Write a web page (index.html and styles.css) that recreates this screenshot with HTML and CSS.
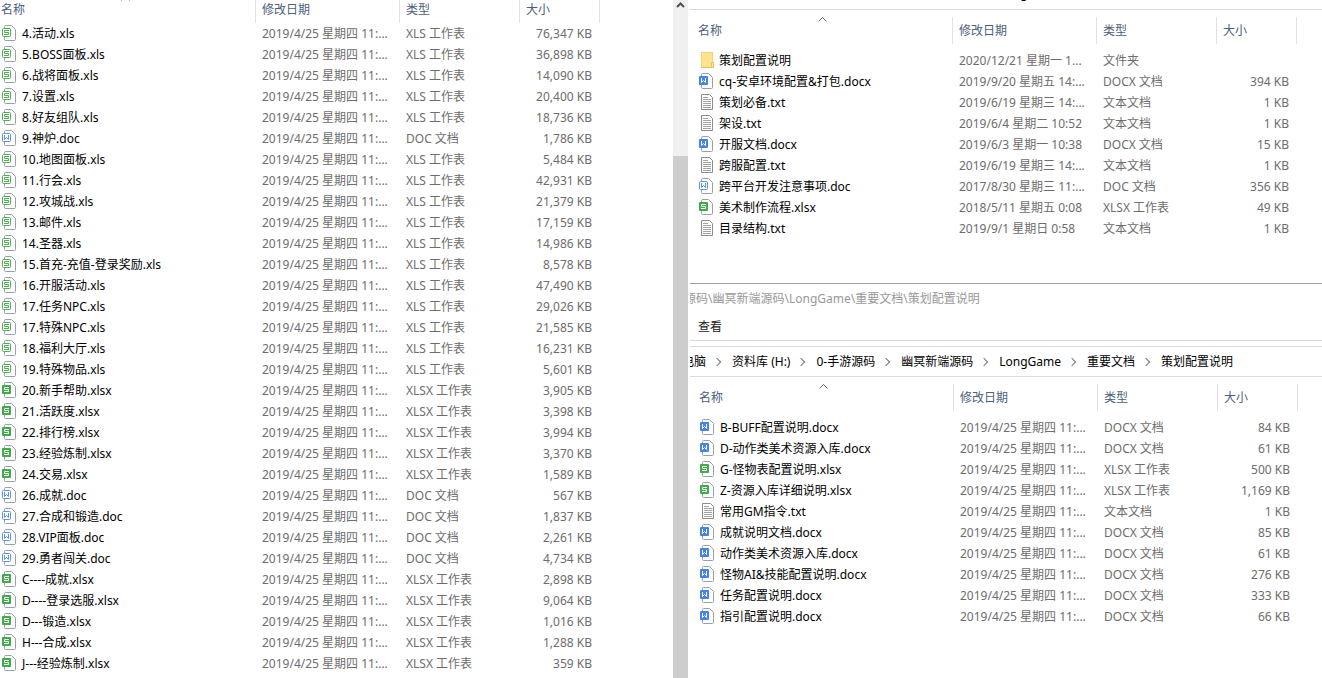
FILE: index.html
```html
<!DOCTYPE html>
<html lang="zh-CN">
<head>
    <meta charset="UTF-8">
    <meta name="viewport" content="width=device-width, initial-scale=1.0">
    <title>策划配置说明</title>
    <link rel="stylesheet" href="styles.css">
</head>
<body>

    <!-- file type icons -->
    <svg class="sprite" aria-hidden="true">
        <symbol id="page" viewBox="0 0 16 16">
            <path d="M3.500 4V1.500q0-1 1-1H10.500L14.500 4.500V14.500q0 1-1 1H4.500q-1 0-1-1V12" fill="#fff" stroke="#98a0ae"/>
        </symbol>
        <symbol id="xls" viewBox="0 0 16 16">
            <use href="#page"/>
            <rect x="1.500" y="3.500" width="8" height="8" rx="1" fill="#fff" stroke="#4caf50"/>
            <path d="M8 5.500H3.500v2h4v2H3" fill="none" stroke="#4caf50"/>
        </symbol>
        <symbol id="xlsx" viewBox="0 0 16 16">
            <use href="#page"/>
            <rect x="1" y="3" width="9" height="9" rx="1" fill="#3fac49"/>
            <path d="M8 5.500H3.500v2h4v2H3" fill="none" stroke="#fff"/>
        </symbol>
        <symbol id="doc" viewBox="0 0 16 16">
            <use href="#page"/>
            <rect x="1.500" y="3.500" width="8" height="8" rx="1" fill="#fff" stroke="#5b93ea"/>
            <path d="M3.500 5v4.500L5.500 7.500L7.500 9.500V5" fill="none" stroke="#5b93ea"/>
        </symbol>
        <symbol id="docx" viewBox="0 0 16 16">
            <use href="#page"/>
            <rect x="1" y="3" width="9" height="9" rx="1" fill="#4584e6"/>
            <path d="M3.500 5v4.500L5.500 7.500L7.500 9.500V5" fill="none" stroke="#fff"/>
        </symbol>
        <symbol id="txt" viewBox="0 0 16 16">
            <path d="M3.500 .5H11.500L14.500 3.500V15.500H3.500z" fill="#fff" stroke="#8c8c8c"/>
            <path d="M5 3.500h5M5 5.500h8M5 7.500h8M5 9.500h8M5 11.500h8M5 13.500h8" stroke="#a3a3a3"/>
        </symbol>
        <symbol id="folder" viewBox="0 0 16 16">
            <path d="M3 0H15V9.500L16 10.500V16H3z" fill="#e8c35a"/>
            <path d="M3.500 .5H14.500V15H3.500z" fill="#ffe391"/>
            <path d="M13.500 15.500V10.500h2v5z" fill="#ffe9a6" stroke="#e8c35a"/>
        </symbol>
    </svg>

    <main class="desktop">
        <section class="pane pane-left">
            <table class="files" id="list-main">
                <colgroup><col class="c-name"><col class="c-date"><col class="c-type"><col class="c-size"><col></colgroup>
                <thead><tr><th><span>名称</span><svg class="sort" viewBox="0 0 9 5"><path d="M.5 4.500l4-4 4 4"/></svg></th><th><span>修改日期</span></th><th><span>类型</span></th><th><span>大小</span></th><th></th></tr></thead>
                <tbody></tbody>
            </table>
        </section>

        <div class="scrollbar">
            <button class="scroll-up" aria-label="向上滚动"><svg viewBox="0 0 9 6"><path d="M1 5l3.500-3.500L8 5"/></svg></button>
            <div class="thumb"></div>
        </div>

        <section class="pane pane-right">
            <div class="window window-top">
                <nav class="crumbs">
                    <a href="#">电脑</a><a href="#">资料库 (H:)</a><a href="#">0-手游源码</a><a href="#">幽冥新端源码</a><a href="#">LongGame</a><a href="#">重要文档</a>
                </nav>
                <table class="files" id="list-docs">
                    <colgroup><col class="c-name"><col class="c-date"><col class="c-type"><col class="c-size"><col></colgroup>
                    <thead><tr><th><span>名称</span><svg class="sort" viewBox="0 0 9 5"><path d="M.5 4.500l4-4 4 4"/></svg></th><th><span>修改日期</span></th><th><span>类型</span></th><th><span>大小</span></th><th></th></tr></thead>
                    <tbody></tbody>
                </table>
            </div>

            <div class="window window-bottom">
                <div class="title">源码\幽冥新端源码\LongGame\重要文档\策划配置说明</div>
                <div class="menu"><button>查看</button></div>
                <nav class="crumbs">
                    <a href="#">电脑</a><a href="#">资料库 (H:)</a><a href="#">0-手游源码</a><a href="#">幽冥新端源码</a><a href="#">LongGame</a><a href="#">重要文档</a><a href="#">策划配置说明</a>
                </nav>
                <table class="files" id="list-config">
                    <colgroup><col class="c-name"><col class="c-date"><col class="c-type"><col class="c-size"><col></colgroup>
                    <thead><tr><th><span>名称</span><svg class="sort" viewBox="0 0 9 5"><path d="M.5 4.500l4-4 4 4"/></svg></th><th><span>修改日期</span></th><th><span>类型</span></th><th><span>大小</span></th><th></th></tr></thead>
                    <tbody></tbody>
                </table>
            </div>
        </section>
    </main>

    <script src="files.js"></script>
</body>
</html>
```
FILE: styles.css
```css
* {
    box-sizing: border-box;
}
body {
    margin: 0;
    font-family: "Noto Sans", "Noto Sans CJK SC", sans-serif;
    font-size: 12px;
    line-height: 20px;
    color: #000;
    background: #fff;
}
.sprite {
    position: absolute;
    width: 0;
    height: 0;
}
.desktop {
    display: grid;
    grid-template-columns: 673fr 15px 634fr;
    height: 100vh;
    overflow: hidden;
}
.pane {
    min-width: 0;
    overflow: hidden;
}
.pane-right {
    margin-left: 2px;
}

/* file lists */
.files {
    width: 100%;
    table-layout: fixed;
    border-collapse: collapse;
}
.c-name { width: 263px; }
.c-date { width: 144px; }
.c-type { width: 120px; }
.c-size { width: 80px; }
.files th {
    position: relative;
    height: 33px;
    padding: 0;
    vertical-align: top;
    text-align: left;
    font-weight: normal;
    color: #4c607a;
}
.files th span {
    display: block;
    height: 27px;
    padding-left: 6px;
    line-height: 27px;
    border-right: 1px solid #e2e2e2;
}
.files th:first-child span {
    padding-left: 8px;
}
.sort {
    position: absolute;
    top: 0;
    left: 50%;
    width: 9px;
    height: 5px;
    margin-left: -4px;
    fill: none;
    stroke: #6e6e6e;
}
.files td {
    height: 21px;
    padding: 0 6px;
    line-height: 21px;
    color: #6d6d6d;
    white-space: nowrap;
}
.files td:first-child {
    padding-left: 8px;
    color: #000;
}
.files td:nth-child(4) {
    padding-right: 8px;
    text-align: right;
}
.name {
    display: flex;
    align-items: flex-start;
    gap: 5px;
    height: 21px;
}
.name svg {
    flex: none;
    width: 16px;
    height: 16px;
    margin-top: 2px;
}

/* the main list is scrolled a little past its top left corner */
.pane-left .files {
    margin: -4px 0 0 -7px;
}
.pane-left .files th {
    height: 27px;
}

/* scrollbar */
.scrollbar {
    display: flex;
    flex-direction: column;
    background: #f0f0f0;
}
.scroll-up {
    display: flex;
    align-items: center;
    justify-content: center;
    height: 10px;
    padding: 0;
    border: 0;
    background: none;
}
.scroll-up svg {
    width: 9px;
    height: 6px;
    fill: none;
    stroke: #505050;
    stroke-width: 2;
}
.thumb {
    flex: 1;
    margin-top: 146px;
    background: #cdcdcd;
}

/* right windows */
.window-top {
    display: flow-root;
    height: 283px;
}
.window-top .crumbs {
    margin-top: -21px;
}
.window-top .files,
.window-bottom .files {
    margin-top: 7px;
}
.window-bottom {
    border-top: 1px solid #a0a0a0;
}
.window-bottom .files {
    margin-left: 1px;
}
.title {
    height: 30px;
    margin-left: -6px;
    line-height: 30px;
    color: #999;
    white-space: nowrap;
}
.menu {
    height: 27px;
    padding: 0 8px;
    border-bottom: 1px solid #dadada;
}
.menu button {
    padding: 0;
    border: 0;
    background: none;
    font: inherit;
    line-height: 26px;
    color: #222;
}
.crumbs {
    display: flex;
    height: 31px;
    border-bottom: 1px solid #dadada;
    line-height: 30px;
    white-space: nowrap;
}
.window-bottom .crumbs {
    margin-top: 5px;
    border-top: 1px solid #dadada;
    line-height: 28px;
}
.crumbs a {
    display: flex;
    align-items: center;
    color: #000;
    text-decoration: none;
}
.crumbs a:first-child {
    margin-left: -8px;
}
.crumbs a + a::before {
    content: "";
    width: 5px;
    height: 5px;
    margin: 0 12px 0 8px;
    border: solid #777;
    border-width: 1px 1px 0 0;
    transform: rotate(45deg);
}
```
FILE: files.js
```js
const TYPES = {
    xls: "XLS 工作表",
    xlsx: "XLSX 工作表",
    doc: "DOC 文档",
    docx: "DOCX 文档",
    txt: "文本文档",
    folder: "文件夹"
};

const DAY = "2019/4/25 星期四 11:...";

const mainFiles = [
    ["4.活动.xls", DAY, "76,347 KB"],
    ["5.BOSS面板.xls", DAY, "36,898 KB"],
    ["6.战将面板.xls", DAY, "14,090 KB"],
    ["7.设置.xls", DAY, "20,400 KB"],
    ["8.好友组队.xls", DAY, "18,736 KB"],
    ["9.神炉.doc", DAY, "1,786 KB"],
    ["10.地图面板.xls", DAY, "5,484 KB"],
    ["11.行会.xls", DAY, "42,931 KB"],
    ["12.攻城战.xls", DAY, "21,379 KB"],
    ["13.邮件.xls", DAY, "17,159 KB"],
    ["14.圣器.xls", DAY, "14,986 KB"],
    ["15.首充-充值-登录奖励.xls", DAY, "8,578 KB"],
    ["16.开服活动.xls", DAY, "47,490 KB"],
    ["17.任务NPC.xls", DAY, "29,026 KB"],
    ["17.特殊NPC.xls", DAY, "21,585 KB"],
    ["18.福利大厅.xls", DAY, "16,231 KB"],
    ["19.特殊物品.xls", DAY, "5,601 KB"],
    ["20.新手帮助.xlsx", DAY, "3,905 KB"],
    ["21.活跃度.xlsx", DAY, "3,398 KB"],
    ["22.排行榜.xlsx", DAY, "3,994 KB"],
    ["23.经验炼制.xlsx", DAY, "3,370 KB"],
    ["24.交易.xlsx", DAY, "1,589 KB"],
    ["26.成就.doc", DAY, "567 KB"],
    ["27.合成和锻造.doc", DAY, "1,837 KB"],
    ["28.VIP面板.doc", DAY, "2,261 KB"],
    ["29.勇者闯关.doc", DAY, "4,734 KB"],
    ["C----成就.xlsx", DAY, "2,898 KB"],
    ["D----登录选服.xlsx", DAY, "9,064 KB"],
    ["D---锻造.xlsx", DAY, "1,016 KB"],
    ["H---合成.xlsx", DAY, "1,288 KB"],
    ["J---经验炼制.xlsx", DAY, "359 KB"]
];

const docFiles = [
    ["策划配置说明", "2020/12/21 星期一 1...", ""],
    ["cq-安卓环境配置&打包.docx", "2019/9/20 星期五 14:...", "394 KB"],
    ["策划必备.txt", "2019/6/19 星期三 14:...", "1 KB"],
    ["架设.txt", "2019/6/4 星期二 10:52", "1 KB"],
    ["开服文档.docx", "2019/6/3 星期一 10:38", "15 KB"],
    ["跨服配置.txt", "2019/6/19 星期三 14:...", "1 KB"],
    ["跨平台开发注意事项.doc", "2017/8/30 星期三 11:...", "356 KB"],
    ["美术制作流程.xlsx", "2018/5/11 星期五 0:08", "49 KB"],
    ["目录结构.txt", "2019/9/1 星期日 0:58", "1 KB"]
];

const configFiles = [
    ["B-BUFF配置说明.docx", DAY, "84 KB"],
    ["D-动作类美术资源入库.docx", DAY, "61 KB"],
    ["G-怪物表配置说明.xlsx", DAY, "500 KB"],
    ["Z-资源入库详细说明.xlsx", DAY, "1,169 KB"],
    ["常用GM指令.txt", DAY, "1 KB"],
    ["成就说明文档.docx", DAY, "85 KB"],
    ["动作类美术资源入库.docx", DAY, "61 KB"],
    ["怪物AI&技能配置说明.docx", DAY, "276 KB"],
    ["任务配置说明.docx", DAY, "333 KB"],
    ["指引配置说明.docx", DAY, "66 KB"]
];

function fillTable(id, files) {
    const body = document.querySelector(`#${id} tbody`);
    files.forEach(([name, date, size]) => {
        const ext = name.includes(".") ? name.split(".").pop() : "folder";
        const row = body.insertRow();
        row.insertCell().innerHTML = `<div class="name"><svg><use href="#${ext}"/></svg><span></span></div>`;
        row.querySelector("span").textContent = name;
        row.insertCell().textContent = date;
        row.insertCell().textContent = TYPES[ext];
        row.insertCell().textContent = size;
        row.insertCell();
    });
}

fillTable("list-main", mainFiles);
fillTable("list-docs", docFiles);
fillTable("list-config", configFiles);
```
